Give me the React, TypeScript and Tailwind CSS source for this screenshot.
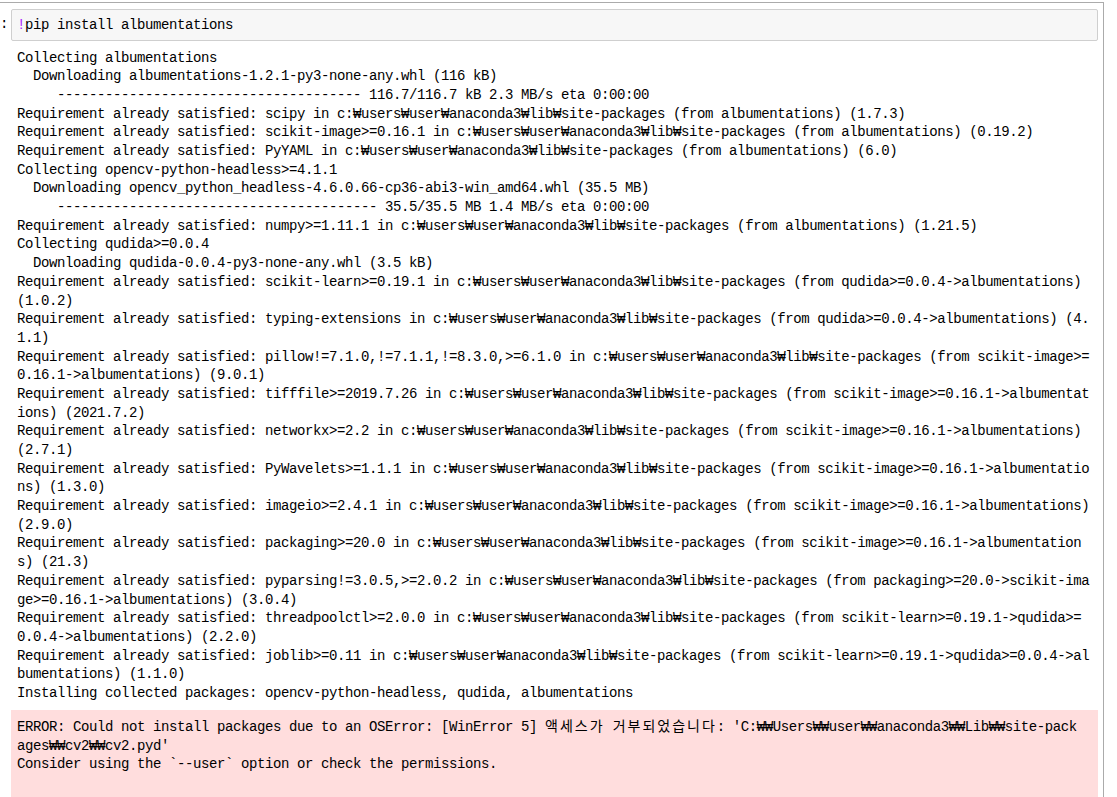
const W = "₩";

const dash38 = "-".repeat(38);
const dash40 = "-".repeat(40);
const site = `c:${W}users${W}user${W}anaconda3${W}lib${W}site-packages`;

const stdout: string[] = [
  "Collecting albumentations",
  "  Downloading albumentations-1.2.1-py3-none-any.whl (116 kB)",
  `     ${dash38} 116.7/116.7 kB 2.3 MB/s eta 0:00:00`,
  `Requirement already satisfied: scipy in ${site} (from albumentations) (1.7.3)`,
  `Requirement already satisfied: scikit-image>=0.16.1 in ${site} (from albumentations) (0.19.2)`,
  `Requirement already satisfied: PyYAML in ${site} (from albumentations) (6.0)`,
  "Collecting opencv-python-headless>=4.1.1",
  "  Downloading opencv_python_headless-4.6.0.66-cp36-abi3-win_amd64.whl (35.5 MB)",
  `     ${dash40} 35.5/35.5 MB 1.4 MB/s eta 0:00:00`,
  `Requirement already satisfied: numpy>=1.11.1 in ${site} (from albumentations) (1.21.5)`,
  "Collecting qudida>=0.0.4",
  "  Downloading qudida-0.0.4-py3-none-any.whl (3.5 kB)",
  `Requirement already satisfied: scikit-learn>=0.19.1 in ${site} (from qudida>=0.0.4->albumentations)`,
  "(1.0.2)",
  `Requirement already satisfied: typing-extensions in ${site} (from qudida>=0.0.4->albumentations) (4.`,
  "1.1)",
  `Requirement already satisfied: pillow!=7.1.0,!=7.1.1,!=8.3.0,>=6.1.0 in ${site} (from scikit-image>=`,
  "0.16.1->albumentations) (9.0.1)",
  `Requirement already satisfied: tifffile>=2019.7.26 in ${site} (from scikit-image>=0.16.1->albumentat`,
  "ions) (2021.7.2)",
  `Requirement already satisfied: networkx>=2.2 in ${site} (from scikit-image>=0.16.1->albumentations)`,
  "(2.7.1)",
  `Requirement already satisfied: PyWavelets>=1.1.1 in ${site} (from scikit-image>=0.16.1->albumentatio`,
  "ns) (1.3.0)",
  `Requirement already satisfied: imageio>=2.4.1 in ${site} (from scikit-image>=0.16.1->albumentations)`,
  "(2.9.0)",
  `Requirement already satisfied: packaging>=20.0 in ${site} (from scikit-image>=0.16.1->albumentation`,
  "s) (21.3)",
  `Requirement already satisfied: pyparsing!=3.0.5,>=2.0.2 in ${site} (from packaging>=20.0->scikit-ima`,
  "ge>=0.16.1->albumentations) (3.0.4)",
  `Requirement already satisfied: threadpoolctl>=2.0.0 in ${site} (from scikit-learn>=0.19.1->qudida>=`,
  "0.0.4->albumentations) (2.2.0)",
  `Requirement already satisfied: joblib>=0.11 in ${site} (from scikit-learn>=0.19.1->qudida>=0.0.4->al`,
  "bumentations) (1.1.0)",
  "Installing collected packages: opencv-python-headless, qudida, albumentations",
];

const mono = "font-['Liberation_Mono','DejaVu_Sans_Mono','Noto_Sans_CJK_KR',monospace] text-[14px] tracking-[-0.4px] leading-[18.68px] text-black";

function Hangul({ text }: { text: string }) {
  return (
    <span className="font-['Noto_Sans_CJK_KR',sans-serif] text-[14px] tracking-[2px]">{text}</span>
  );
}

export default function App() {
  return (
    <div className="h-[797px] w-[1117px] overflow-hidden bg-white">
      <div className="mt-[2px] flex h-[800px] w-[1104px] flex-col border-t border-r border-[#ababab]">
        {/* input row */}
        <div className="mt-[6px] flex">
          <div className={`w-[11px] pt-[6px] text-[#303f9f] ${mono}`}>:</div>
          <div className={`flex h-[32px] w-[1087px] items-center rounded-[2px] border border-[#cfcfcf] bg-[#f7f7f7] pl-[5px] whitespace-pre ${mono}`}>
            <span className="text-[#aa22ff]">!</span>pip install albumentations
          </div>
        </div>

        {/* stdout */}
        <div className={`ml-[11px] pl-[6px] pt-[7.6px] whitespace-pre ${mono}`}>
          {stdout.map((line, i) => (
            <div key={i}>{line || " "}</div>
          ))}
        </div>

        {/* stderr */}
        <div className={`mt-[7.5px] ml-[11px] w-[1087px] flex-1 bg-[#fdd] pl-[6px] pt-[5.7px] whitespace-pre ${mono}`}>
          <div>
            ERROR: Could not install packages due to an OSError: [WinError 5] <Hangul text="액세스가" /> <Hangul text="거부되었습니다" />
            {`: 'C:${W}${W}Users${W}${W}user${W}${W}anaconda3${W}${W}Lib${W}${W}site-pack`}
          </div>
          <div>{`ages${W}${W}cv2${W}${W}cv2.pyd'`}</div>
          <div>Consider using the `--user` option or check the permissions.</div>
        </div>
      </div>
    </div>
  );
}
